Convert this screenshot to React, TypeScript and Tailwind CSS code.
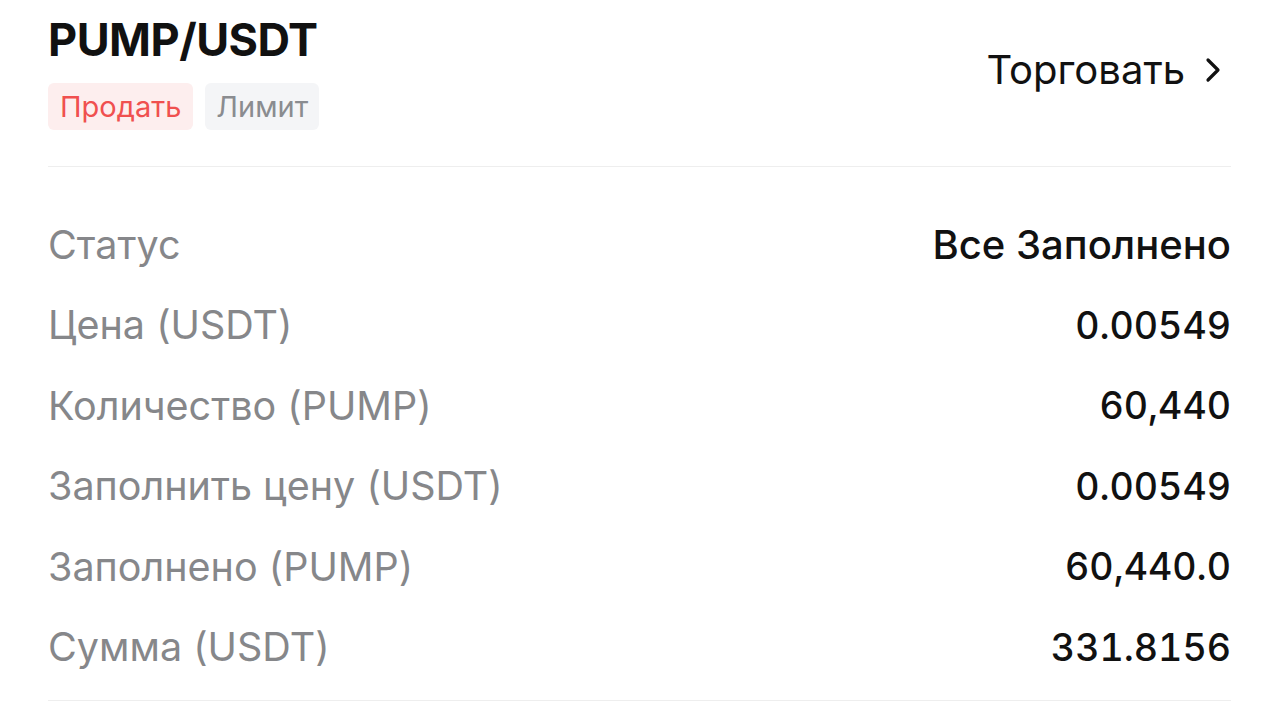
import React from "react";

const rows: [string, string][] = [
  ["Статус", "Все Заполнено"],
  ["Цена (USDT)", "0.00549"],
  ["Количество (PUMP)", "60,440"],
  ["Заполнить цену (USDT)", "0.00549"],
  ["Заполнено (PUMP)", "60,440.0"],
  ["Сумма (USDT)", "331.8156"],
];

export default function App() {
  return (
    <div
      className="w-[1280px] h-[703px] bg-white overflow-hidden"
      style={{ fontFamily: "Inter, 'Noto Sans', sans-serif" }}
    >
      <div className="mx-[48px] w-[1183px]">
        <div className="flex items-start justify-between pt-[14px] h-[166px]">
          <div className="flex flex-col">
            <div className="text-[45px] leading-[52px] font-bold text-[#111] tracking-[-0.5px]">
              PUMP/USDT
            </div>
            <div className="flex gap-[12px] mt-[17px]">
              <div className="h-[47px] px-[12px] rounded-[6px] bg-[#fdeeee] text-[#f0504f] text-[29px] flex items-center">
                Продать
              </div>
              <div className="h-[47px] px-[11px] rounded-[6px] bg-[#f4f5f7] text-[#8a8c90] text-[29px] flex items-center">
                Лимит
              </div>
            </div>
          </div>
          <div className="flex items-center gap-[20px] mt-[30px] mr-[10px] text-[#111]">
            <span className="text-[40px] leading-[52px]">Торговать</span>
            <svg width="16" height="26" viewBox="0 0 16 26" fill="none">
              <path d="M3 3 L13 13 L3 23" stroke="#111" strokeWidth="3.2" strokeLinecap="round" strokeLinejoin="round" />
            </svg>
          </div>
        </div>
        <div className="h-[1px] bg-[#eeeeee]" />
        <div className="pt-[38px] pb-[12px]">
          {rows.map(([l, v], i) => (
            <div key={l} className="flex items-center justify-between h-[80.5px]">
              <span className="text-[39.5px] text-[#86878a]">{l}</span>
              {i === 0 ? (
                <span className="text-[40px] font-medium text-[#111]">{v}</span>
              ) : (
                <span className="text-[37.5px] font-medium text-[#111] tabular-nums">{v}</span>
              )}
            </div>
          ))}
        </div>
        <div className="h-[1px] bg-[#eeeeee]" />
      </div>
    </div>
  );
}
